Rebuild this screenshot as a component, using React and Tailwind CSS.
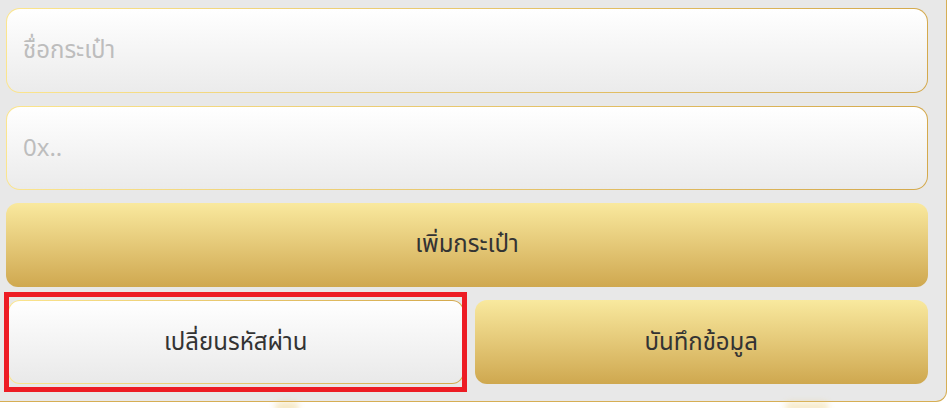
export default function App() {
  const field = (placeholder, h) => (
    <div className={`rounded-[14px] bg-gradient-to-r from-[#fbe58e] to-[#d4a94c] p-px ${h}`}>
      <input
        type="text"
        placeholder={placeholder}
        className="h-full w-full rounded-[13px] bg-gradient-to-b from-white to-[#ebebeb] px-4 pb-[4px] text-[24px] text-[#333] outline-none placeholder:text-[#bdbdbd]"
      />
    </div>
  );

  return (
    <div className="relative h-[408px] w-[952px] overflow-hidden bg-white font-['Noto_Sans','Noto_Sans_Thai',sans-serif]">
      <div className="flex h-[402px] w-[947px] flex-col gap-[13px] rounded-br-[11px] border-b border-r border-[#d6ae55] bg-[#e8e8e8] pl-[6px] pr-[18px] pt-[8px]">
        {field('ชื่อกระเป๋า', 'h-[85px]')}
        {field('0x..', 'h-[84px]')}
        <button className="h-[84px] rounded-[12px] bg-gradient-to-b from-[#f9e99e] to-[#cfa84f] pb-[5px] text-[24px] text-[#333]">
          เพิ่มกระเป๋า
        </button>
        <div className="flex h-[84px] gap-[11px] pl-[2px]">
          <div className="flex-1 rounded-[12px] bg-gradient-to-r from-[#fbe58e] to-[#d4a94c] p-px">
            <button className="h-full w-full rounded-[11px] bg-gradient-to-b from-white to-[#e9e9e9] pb-[3px] text-[24px] text-[#333]">
              เปลี่ยนรหัสผ่าน
            </button>
          </div>
          <button className="flex-1 rounded-[12px] bg-gradient-to-b from-[#f9e99e] to-[#cfa84f] pb-[3px] text-[24px] text-[#333]">
            บันทึกข้อมูล
          </button>
        </div>
      </div>

      {/* blurred gold decoration peeking below the panel */}
      <div className="absolute left-[275px] top-[402px] h-[10px] w-[24px] rounded-full bg-[#e8c66a] opacity-40 blur-[3px]" />
      <div className="absolute left-[785px] top-[402px] h-[10px] w-[44px] rounded-full bg-[#e8c66a] opacity-35 blur-[3px]" />

      {/* red highlight frame */}
      <div className="pointer-events-none absolute left-[4px] top-[292px] h-[100px] w-[463px] border-[5px] border-[#ed1c24]" />
    </div>
  );
}
